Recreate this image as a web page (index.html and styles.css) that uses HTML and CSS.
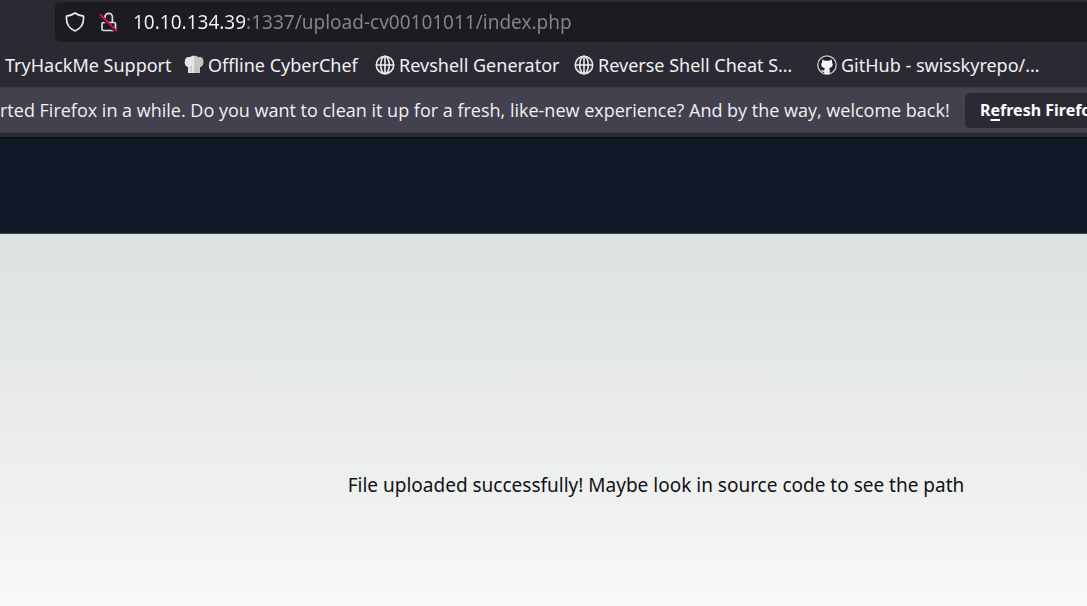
FILE: index.html
```html
<!DOCTYPE html>
<html lang="en">
<head>
<meta charset="utf-8">
<title>Upload CV</title>
<link rel="stylesheet" href="styles.css">
</head>
<body>
<div class="browser">
  <div class="toolbar">
    <div class="urlbar">
      <svg class="url-icon" viewBox="0 0 20 20" fill="none" stroke="#e6e6ea" stroke-width="1.7" stroke-linejoin="round" aria-hidden="true"><path d="M10 1C8 2.600 4.800 3.700 1.500 4.200C1 10.500 3.500 16.300 10 19C16.500 16.300 19 10.500 18.500 4.200C15.200 3.700 12 2.600 10 1Z"/></svg>
      <svg class="url-icon" viewBox="0 0 20 20" fill="none" aria-hidden="true"><path d="M6 6V5a3.700 3.700 0 0 1 7.400 0v5M4.500 10.500h10.500a1.500 1.500 0 0 1 1.500 1.500v5a1.500 1.500 0 0 1-1.500 1.500H4.500A1.500 1.500 0 0 1 3 17v-5A1.500 1.500 0 0 1 4.500 10.500Z" stroke="#dedee2" stroke-width="1.700"/><path d="M2 4.500L17 19.500" stroke="#1c1b22" stroke-width="3"/><path d="M1.200 2.500L18 19.300" stroke="#e20e45" stroke-width="1.800"/></svg>
      <input class="url-input" type="text" aria-label="Address" value="10.10.134.39:1337/upload-cv00101011/index.php">
    </div>
  </div>
  <nav class="bookmarks" aria-label="Bookmarks">
    <a class="bookmark bookmark-support" href="#">TryHackMe Support</a>
    <a class="bookmark bookmark-chef" href="#">
      <svg class="favicon" viewBox="0 0 20 20" aria-hidden="true"><path fill="#e4e4e2" d="M4 18V12C1.500 11.500.5 9.500.7 6.500C1 3 3.500 1.500 6 2.300C8 .5 11.800.3 14 2.300C17 1.500 19.500 3.500 19.300 7C19.300 9.800 18 11.500 16 12V18Z"/><path fill="#c5c5c2" d="M10 1C12 .8 13 1.300 14 2.300C17 1.500 19.500 3.500 19.300 7C19.300 9.800 18 11.500 16 12V18H10Z"/><path stroke="#aaa" stroke-width=".8" d="M7 11v6M13 11v6"/></svg>
      Offline CyberChef
    </a>
    <a class="bookmark bookmark-revshell" href="#">
      <svg class="favicon" viewBox="0 0 20 20" fill="none" stroke="#ececf0" stroke-width="1.6" aria-hidden="true"><circle cx="10" cy="10" r="8.700"/><ellipse cx="10" cy="10" rx="4.300" ry="8.700"/><path d="M10 1.300v17.400M1.300 10h17.400"/></svg>
      Revshell Generator
    </a>
    <a class="bookmark bookmark-cheat" href="#">
      <svg class="favicon" viewBox="0 0 20 20" fill="none" stroke="#ececf0" stroke-width="1.6" aria-hidden="true"><circle cx="10" cy="10" r="8.700"/><ellipse cx="10" cy="10" rx="4.300" ry="8.700"/><path d="M10 1.300v17.400M1.300 10h17.400"/></svg>
      Reverse Shell Cheat S…
    </a>
    <a class="bookmark" href="#">
      <svg class="favicon" viewBox="0 0 20 20" aria-hidden="true"><circle cx="10" cy="10" r="9.200" fill="#202027" stroke="#c8c8cc" stroke-width="1.300"/><path fill="#f4f4f4" d="M5.300 4.500L8 5.800h4l2.700-1.300.4 3C16.500 9.800 15.500 12.500 12.200 13.200L12.800 15v4.200H7.200V17C5 17.300 4.800 15.500 3.500 15C5 14.500 5.500 16 7.200 15.500L7.800 13.200C4.500 12.500 3.500 9.800 4.900 7.500Z"/></svg>
      GitHub - swisskyrepo/…
    </a>
  </nav>
  <div class="notification">
    <p class="notification-text">rted Firefox in a while. Do you want to clean it up for a fresh, like-new experience? And by the way, welcome back!</p>
    <button class="refresh" type="button">R<span class="accesskey">e</span>fresh Firefox…</button>
  </div>
</div>
<header class="site-header"></header>
<main class="content">
  <p class="message">File uploaded successfully! Maybe look in source code to see the path</p>
</main>
</body>
</html>
```
FILE: styles.css
```css
* {
  box-sizing: border-box;
}

body {
  display: flex;
  flex-direction: column;
  min-height: 100vh;
  margin: 0;
  overflow: hidden;
  font-family: "Noto Sans", "Open Sans", sans-serif;
  font-size: 18px;
  line-height: 24px;
}

p {
  margin: 0;
}

.browser {
  padding-bottom: 4px;
  border-bottom: 2px solid #101014;
  background: #2b2a33;
  color: #f0f0f4;
  white-space: nowrap;
}

.toolbar {
  padding: 2px 0 8px 55px;
}

.urlbar {
  display: flex;
  align-items: center;
  height: 40px;
  padding-left: 10px;
  border-radius: 5px 0 0 5px;
  background: #1c1b22;
}

.url-icon {
  flex: none;
  width: 20px;
  height: 20px;
  margin-right: 14px;
}

.url-input {
  flex: 1;
  min-width: 0;
  padding: 0;
  border: 0;
  outline: 0;
  background: linear-gradient(to right, #f4f4f8 112px, #85858c 112px);
  background-clip: text;
  color: transparent;
  font: inherit;
  font-size: 19px;
}

.bookmarks {
  display: flex;
  align-items: center;
  height: 37px;
  padding: 0 0 7px 5px;
}

.bookmark {
  display: flex;
  flex: none;
  gap: 4px;
  align-items: center;
  color: inherit;
  text-decoration: none;
}

.bookmark-support {
  width: 179px;
}

.bookmark-chef {
  width: 191px;
}

.bookmark-revshell {
  width: 199px;
}

.bookmark-cheat {
  width: 243px;
}

.favicon {
  flex: none;
  width: 20px;
  height: 20px;
}

.notification {
  display: flex;
  align-items: center;
  height: 46px;
  border-top: 1px solid #3b3944;
  border-bottom: 1px solid #3b3944;
  background: #42414d;
}

.notification-text {
  flex: none;
  width: 965px;
  font-family: "Open Sans", "Noto Sans", sans-serif;
}

.refresh {
  flex: none;
  height: 35px;
  padding: 0 15px;
  border: 0;
  border-radius: 5px;
  background: #2b2a33;
  color: #fbfbfe;
  font: inherit;
  font-size: 16px;
  font-weight: 700;
}

.accesskey {
  text-decoration: underline;
  text-decoration-thickness: 2px;
  text-underline-offset: 3px;
}

.site-header {
  height: 95px;
  border-bottom: 1px solid #374151;
  background: #111827;
}

.content {
  display: flex;
  flex: 1;
  justify-content: center;
  padding: 239px 0 0 225px;
  background: linear-gradient(#dce1e1, #ecedee 58%, #f7faf8);
  color: #111114;
}

.message {
  font-size: 19px;
  white-space: nowrap;
}
```
